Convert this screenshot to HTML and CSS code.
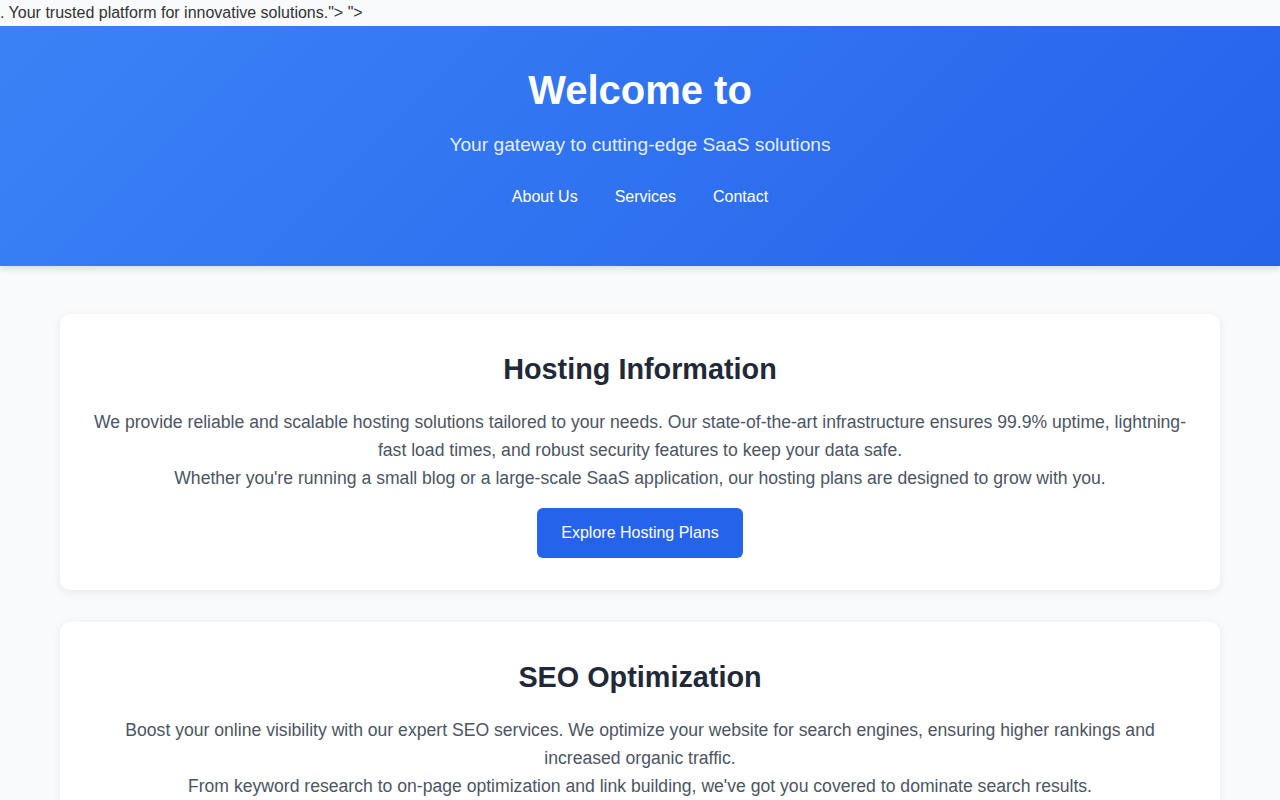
FILE: index.html
```html
<!DOCTYPE html>
<html lang="en">
<head>
    <meta charset="UTF-8">
    <title>Welcome</title>
    <link rel="stylesheet" href="styles.css">
</head>
<body>
<div class="stray">. Your trusted platform for innovative solutions."&gt; "&gt;</div>
<!-- top banner with title and navigation -->
<header class="hero">
    <h1 class="hero-title">Welcome to</h1>
    <p class="hero-sub">Your gateway to cutting-edge SaaS solutions</p>
    <nav class="hero-nav">
        <a href="#about">About Us</a>
        <a href="#services">Services</a>
        <a href="#contact">Contact</a>
    </nav>
</header>
<main class="content">
    <section class="card">
        <h2>Hosting Information</h2>
        <p>We provide reliable and scalable hosting solutions tailored to your needs. Our state-of-the-art infrastructure ensures 99.9% uptime, lightning-fast load times, and robust security features to keep your data safe.<br>
        Whether you're running a small blog or a large-scale SaaS application, our hosting plans are designed to grow with you.</p>
        <a class="btn" href="#hosting">Explore Hosting Plans</a>
    </section>
    <section class="card">
        <h2>SEO Optimization</h2>
        <p>Boost your online visibility with our expert SEO services. We optimize your website for search engines, ensuring higher rankings and increased organic traffic.<br>
        From keyword research to on-page optimization and link building, we've got you covered to dominate search results.</p>
        <a class="btn" href="#seo">Learn About SEO</a>
    </section>
</main>
</body>
</html>
```
FILE: styles.css
```css
* {box-sizing:border-box;}
body {margin:0;background:#f8fafc;color:#333;font-family:"Liberation Sans", Arial, sans-serif;font-size:16px;line-height:1.6;}

.hero {background:linear-gradient(135deg, #3b82f6, #2563eb);color:#fff;text-align:center;padding:32px 20px 56px;
    box-shadow:0 4px 6px rgba(0,0,0,0.1);}
.hero-title {margin:0 0 8px;font-size:40px;font-weight:bold;}
.hero-sub {margin:0;font-size:19.2px;color:rgba(255,255,255,0.9);}
.hero-nav {display:flex;justify-content:center;gap:37px;margin-top:24px;}
.hero-nav a {color:#fff;text-decoration:none;}

.content {max-width:1200px;margin:0 auto;padding:48px 20px;display:flex;flex-direction:column;gap:32px;}
.card {background:#fff;border-radius:10px;padding:32px;text-align:center;box-shadow:0 2px 8px rgba(0,0,0,0.08);}
.card h2 {margin:0 0 16px;font-size:28.8px;color:#1f2937;}
.card p {margin:0 0 16px;font-size:17.6px;color:#4b5563;}
.btn {display:inline-block;background:#2563eb;color:#fff;text-decoration:none;padding:12px 24px;border-radius:6px;}
```
